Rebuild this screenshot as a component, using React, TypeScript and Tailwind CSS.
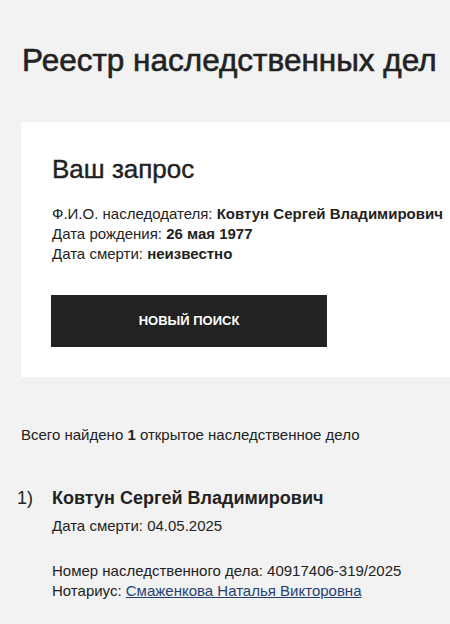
import React from "react";

export default function App() {
  return (
    <div className="min-h-[624px] w-[450px] overflow-hidden bg-[#f2f2f2] text-[#222]" style={{ fontFamily: '"Liberation Sans", Arial, sans-serif' }}>
      <div className="pl-[22px] pt-[42px]">
        <h1 className="whitespace-nowrap text-[31.5px] leading-[36px] font-normal [-webkit-text-stroke:0.6px_#222]">Реестр наследственных дел</h1>
      </div>
      <div className="ml-[21px] mt-[44px] w-[460px] bg-white pl-[31px] pt-[32px] pb-[30px]">
        <h2 className="text-[26px] leading-[30px] font-normal [-webkit-text-stroke:0.4px_#222]">Ваш запрос</h2>
        <div className="mt-[20px] text-[15px] leading-[20px] whitespace-nowrap">
          <div>Ф.И.О. наследодателя: <b>Ковтун Сергей Владимирович</b></div>
          <div>Дата рождения: <b>26 мая 1977</b></div>
          <div>Дата смерти: <b>неизвестно</b></div>
        </div>
        <button className="-ml-px mt-[31px] flex h-[52px] w-[276px] items-center justify-center bg-[#222] text-[13px] font-bold text-white">НОВЫЙ ПОИСК</button>
      </div>
      <div className="mt-[48px] pl-[21px] text-[15px] leading-[20px]">
        Всего найдено <b>1</b> открытое наследственное дело
      </div>
      <div className="mt-[41px] flex">
        <div className="w-[52px] pl-[17px] text-[18px] leading-[24px]">1)</div>
        <div>
          <div className="text-[18px] leading-[24px] font-bold">Ковтун Сергей Владимирович</div>
          <div className="mt-[6px] text-[15px] leading-[20px]">Дата смерти: 04.05.2025</div>
          <div className="mt-[25px] text-[15px] leading-[20px]">Номер наследственного дела: 40917406-319/2025</div>
          <div className="text-[15px] leading-[20px]">Нотариус: <a href="#" className="text-[#263f73] underline">Смаженкова Наталья Викторовна</a></div>
        </div>
      </div>
    </div>
  );
}
